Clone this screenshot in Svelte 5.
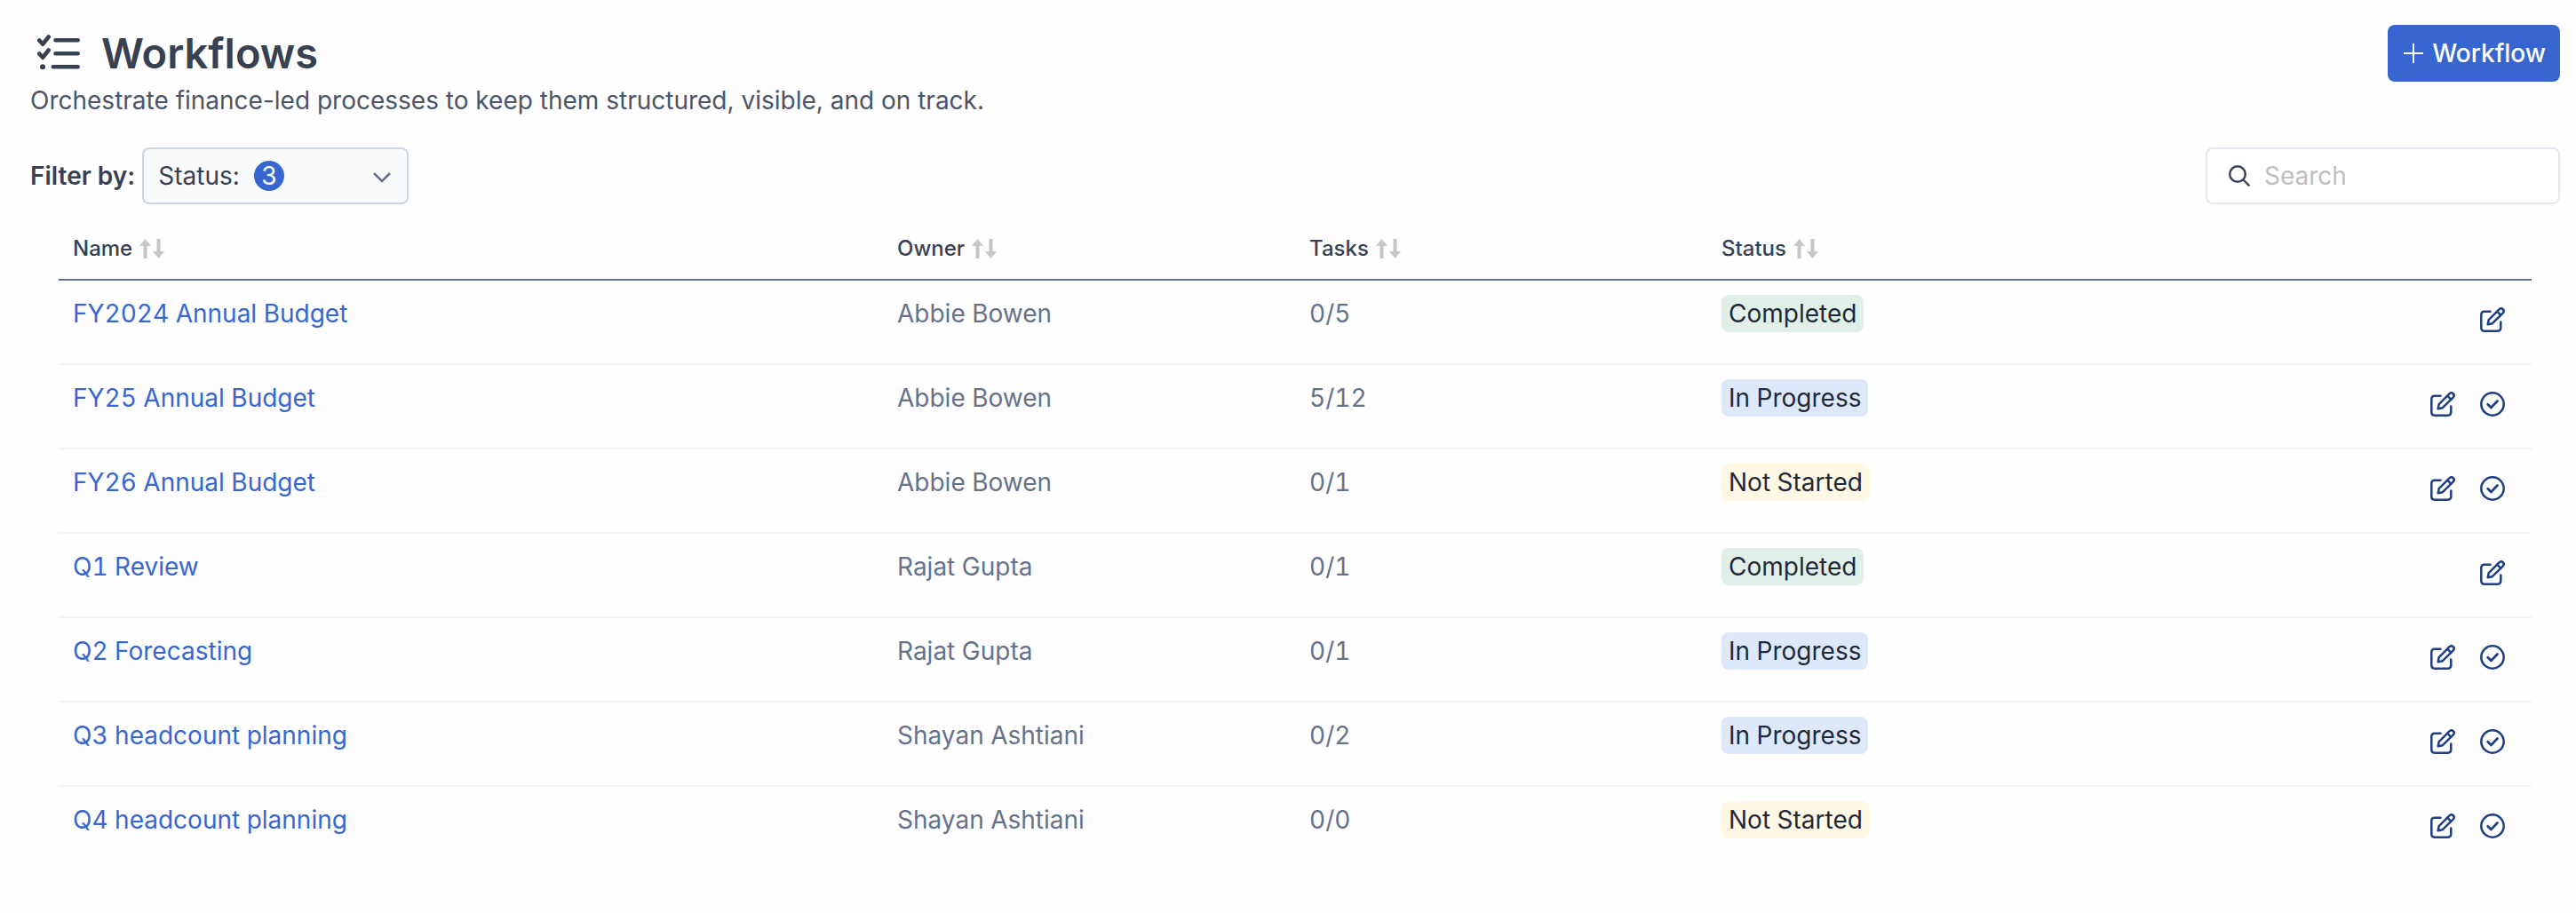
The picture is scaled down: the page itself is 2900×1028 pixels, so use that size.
<script>
    let query = '';
    let sortKey = '';
    let ascending = true;

    const columns = [
        { key: 'name', label: 'Name' },
        { key: 'owner', label: 'Owner' },
        { key: 'tasks', label: 'Tasks' },
        { key: 'status', label: 'Status' }
    ];

    const workflows = [
        { name: 'FY2024 Annual Budget', owner: 'Abbie Bowen', tasks: '0/5', status: 'Completed' },
        { name: 'FY25 Annual Budget', owner: 'Abbie Bowen', tasks: '5/12', status: 'In Progress' },
        { name: 'FY26 Annual Budget', owner: 'Abbie Bowen', tasks: '0/1', status: 'Not Started' },
        { name: 'Q1 Review', owner: 'Rajat Gupta', tasks: '0/1', status: 'Completed' },
        { name: 'Q2 Forecasting', owner: 'Rajat Gupta', tasks: '0/1', status: 'In Progress' },
        { name: 'Q3 headcount planning', owner: 'Shayan Ashtiani', tasks: '0/2', status: 'In Progress' },
        { name: 'Q4 headcount planning', owner: 'Shayan Ashtiani', tasks: '0/0', status: 'Not Started' }
    ];

    const badgeClass = {
        'Completed': 'completed',
        'In Progress': 'progress',
        'Not Started': 'pending'
    };

    function sortBy(key) {
        ascending = sortKey === key ? !ascending : true;
        sortKey = key;
    }

    function getRows(query, sortKey, ascending) {
        let found = workflows.filter((w) => w.name.toLowerCase().includes(query.toLowerCase()));
        if (sortKey) {
            found.sort((a, b) => a[sortKey].localeCompare(b[sortKey]) * (ascending ? 1 : -1));
        }
        return found;
    }

    $: rows = getRows(query, sortKey, ascending);
</script>

<main>
    <header>
        <div>
            <h1>
                <svg class="title-icon" viewBox="0 0 48 48" aria-hidden="true">
                    <g fill="none" stroke="currentColor" stroke-width="4.600" stroke-linecap="round" stroke-linejoin="round">
                        <path d="M2.300 9.500l3.800 4.200L12.700 5.500M2.300 24.500l3.800 4.200L12.700 20.500" />
                        <path d="M20.500 9.200H45.700M20.500 24.200H45.700M17.800 39.200H45.700" />
                    </g>
                    <circle cx="6" cy="39.200" r="3" fill="currentColor" />
                </svg>
                Workflows
            </h1>
            <p>Orchestrate finance-led processes to keep them structured, visible, and on track.</p>
        </div>
        <button class="primary">
            <svg viewBox="0 0 22 22" aria-hidden="true">
                <path d="M11 0v22M0 11h22" stroke="currentColor" stroke-width="2" />
            </svg>
            Workflow
        </button>
    </header>

    <div class="toolbar">
        <div class="filter">
            <span class="filter-label" id="filter-label">Filter by:</span>
            <button class="dropdown" id="status-filter" aria-haspopup="listbox" aria-labelledby="filter-label status-filter">
                Status:
                <span class="count">3</span>
                <svg viewBox="0 0 20 16" aria-hidden="true">
                    <path d="M1 5l9 9 9-9" fill="none" stroke="currentColor" stroke-width="2.500" />
                </svg>
            </button>
        </div>
        <label class="search">
            <svg viewBox="0 0 24 24" aria-hidden="true">
                <g fill="none" stroke="currentColor" stroke-width="2.400">
                    <circle cx="10" cy="10" r="8.800" />
                    <path d="M16.500 16.500l6.800 6.800" />
                </g>
            </svg>
            <input type="text" placeholder="Search" aria-label="Search" bind:value={query}>
        </label>
    </div>

    <table>
        <thead>
            <tr>
                {#each columns as column}
                    <th class={column.key}>
                        <button class="sort" on:click={() => sortBy(column.key)}>
                            {column.label}
                            <svg viewBox="0 0 28 22" aria-hidden="true">
                                <path fill="currentColor" d="M6.500 0L13 8H8.500v14h-4V8H0zM19.500 0v14H15l6.500 8 6.500-8h-4.500V0z" />
                            </svg>
                        </button>
                    </th>
                {/each}
                <th></th>
            </tr>
        </thead>
        <tbody>
            {#each rows as row}
                <tr>
                    <td><a href="#workflow">{row.name}</a></td>
                    <td>{row.owner}</td>
                    <td>{row.tasks}</td>
                    <td><span class="badge {badgeClass[row.status]}">{row.status}</span></td>
                    <td>
                        <div class="actions">
                            <button aria-label="Edit {row.name}">
                                <svg viewBox="0 0 28 28" aria-hidden="true">
                                    <g fill="none" stroke="currentColor" stroke-width="2.500" stroke-linecap="round" stroke-linejoin="round">
                                        <path d="M11.500 4.700H4.700A3.500 3.500 0 0 0 1.300 8v15.300A3.500 3.500 0 0 0 4.700 26.700H20a3.500 3.500 0 0 0 3.300-3.400V16.500" />
                                        <path d="M8.700 19.300l1-5.200L21.700 2.200a2.900 2.900 0 0 1 4.100 4.100L13.800 18.200z" />
                                        <path d="M19.200 4.700l4.100 4.100" />
                                    </g>
                                </svg>
                            </button>
                            {#if row.status !== 'Completed'}
                                <button aria-label="Complete {row.name}">
                                    <svg viewBox="0 0 28 28" aria-hidden="true">
                                        <g fill="none" stroke="currentColor" stroke-width="2.500" stroke-linecap="round" stroke-linejoin="round">
                                            <circle cx="14" cy="14" r="12.700" />
                                            <path stroke-width="2.800" d="M8.700 14.200l3.800 3.700 7-7.400" />
                                        </g>
                                    </svg>
                                </button>
                            {/if}
                        </div>
                    </td>
                </tr>
            {/each}
        </tbody>
    </table>
</main>

<style>
    :global(body) {
        background-color: #fefefe;
    }

    main {
        padding: 28px 18px 28px 34px;
        font-family: Inter, "Liberation Sans", sans-serif;
        font-size: 28px;
        line-height: 42px;
        color: #374151;
    }

    button, input {
        font: inherit;
        color: inherit;
        border: none;
        background: none;
        padding: 0;
    }

    button {
        cursor: pointer;
    }

    header, .toolbar {
        display: flex;
        justify-content: space-between;
        align-items: flex-start;
    }

    h1 {
        display: flex;
        align-items: center;
        gap: 24px;
        margin: 0;
        padding-left: 8px;
        font-size: 47px;
        line-height: 64px;
        font-weight: 600;
    }

    .title-icon {
        width: 48px;
        height: 48px;
    }

    p {
        margin: 0;
        color: #4b5568;
    }

    .primary {
        display: flex;
        align-items: center;
        gap: 10px;
        height: 64px;
        padding: 0 16px 0 18px;
        border-radius: 8px;
        background-color: #3866d1;
        color: white;
        font-weight: 500;
    }

    .primary svg {
        width: 22px;
        height: 22px;
    }

    .toolbar {
        margin-top: 32px;
    }

    .filter {
        display: flex;
        align-items: center;
        gap: 8px;
    }

    .filter-label {
        font-weight: 600;
    }

    .dropdown {
        display: flex;
        align-items: center;
        gap: 16px;
        box-sizing: border-box;
        width: 300px;
        height: 64px;
        padding: 0 18px 0 16px;
        border: 2px solid #cbd3e1;
        border-radius: 8px;
        background-color: #f9fafc;
    }

    .dropdown svg {
        width: 20px;
        height: 16px;
        margin-left: auto;
        color: #64708a;
    }

    .count {
        width: 34px;
        height: 34px;
        border-radius: 50%;
        background-color: #3866d1;
        color: white;
        line-height: 34px;
        text-align: center;
    }

    .search {
        display: flex;
        align-items: center;
        gap: 16px;
        box-sizing: border-box;
        width: 399px;
        height: 64px;
        padding: 0 24px;
        border: 2px solid #e2e7ef;
        border-radius: 8px;
        background-color: white;
    }

    .search svg {
        flex: none;
        width: 24px;
        height: 24px;
    }

    .search input {
        min-width: 0;
        flex: 1;
        outline: none;
    }

    .search input::placeholder {
        color: #bfbfbf;
    }

    table {
        width: calc(100% - 64px);
        margin: 16px 32px 0;
        border-collapse: separate;
        border-spacing: 0;
        table-layout: fixed;
        font-variant-numeric: tabular-nums;
    }

    th, td {
        box-sizing: border-box;
        padding: 16px;
        text-align: left;
        vertical-align: top;
    }

    th {
        border-bottom: 2px solid #66718a;
        font-size: 24px;
        line-height: 36px;
        font-weight: 500;
    }

    th.name {
        width: calc(100% / 3);
    }

    th.owner, th.tasks, th.status {
        width: calc(100% / 6);
    }

    .sort {
        display: flex;
        align-items: center;
        gap: 8px;
    }

    .sort svg {
        width: 28px;
        height: 22px;
        color: #c4c6c9;
    }

    td {
        height: 95px;
        border-bottom: 2px solid #f2f4f9;
        color: #66728a;
    }

    tbody tr:last-child td {
        border-bottom: none;
    }

    a {
        color: #3866d1;
        text-decoration: none;
    }

    .badge {
        display: inline-block;
        padding: 0 8px;
        border-radius: 8px;
        color: #1f2937;
    }

    .completed {
        background-color: #e0efe8;
    }

    .progress {
        background-color: #dee8fb;
    }

    .pending {
        background-color: #fff8e5;
    }

    .actions {
        display: flex;
        justify-content: flex-end;
        color: #203f83;
    }

    .actions button {
        padding: 14px;
    }

    .actions svg {
        display: block;
        width: 28px;
        height: 28px;
    }
</style>
